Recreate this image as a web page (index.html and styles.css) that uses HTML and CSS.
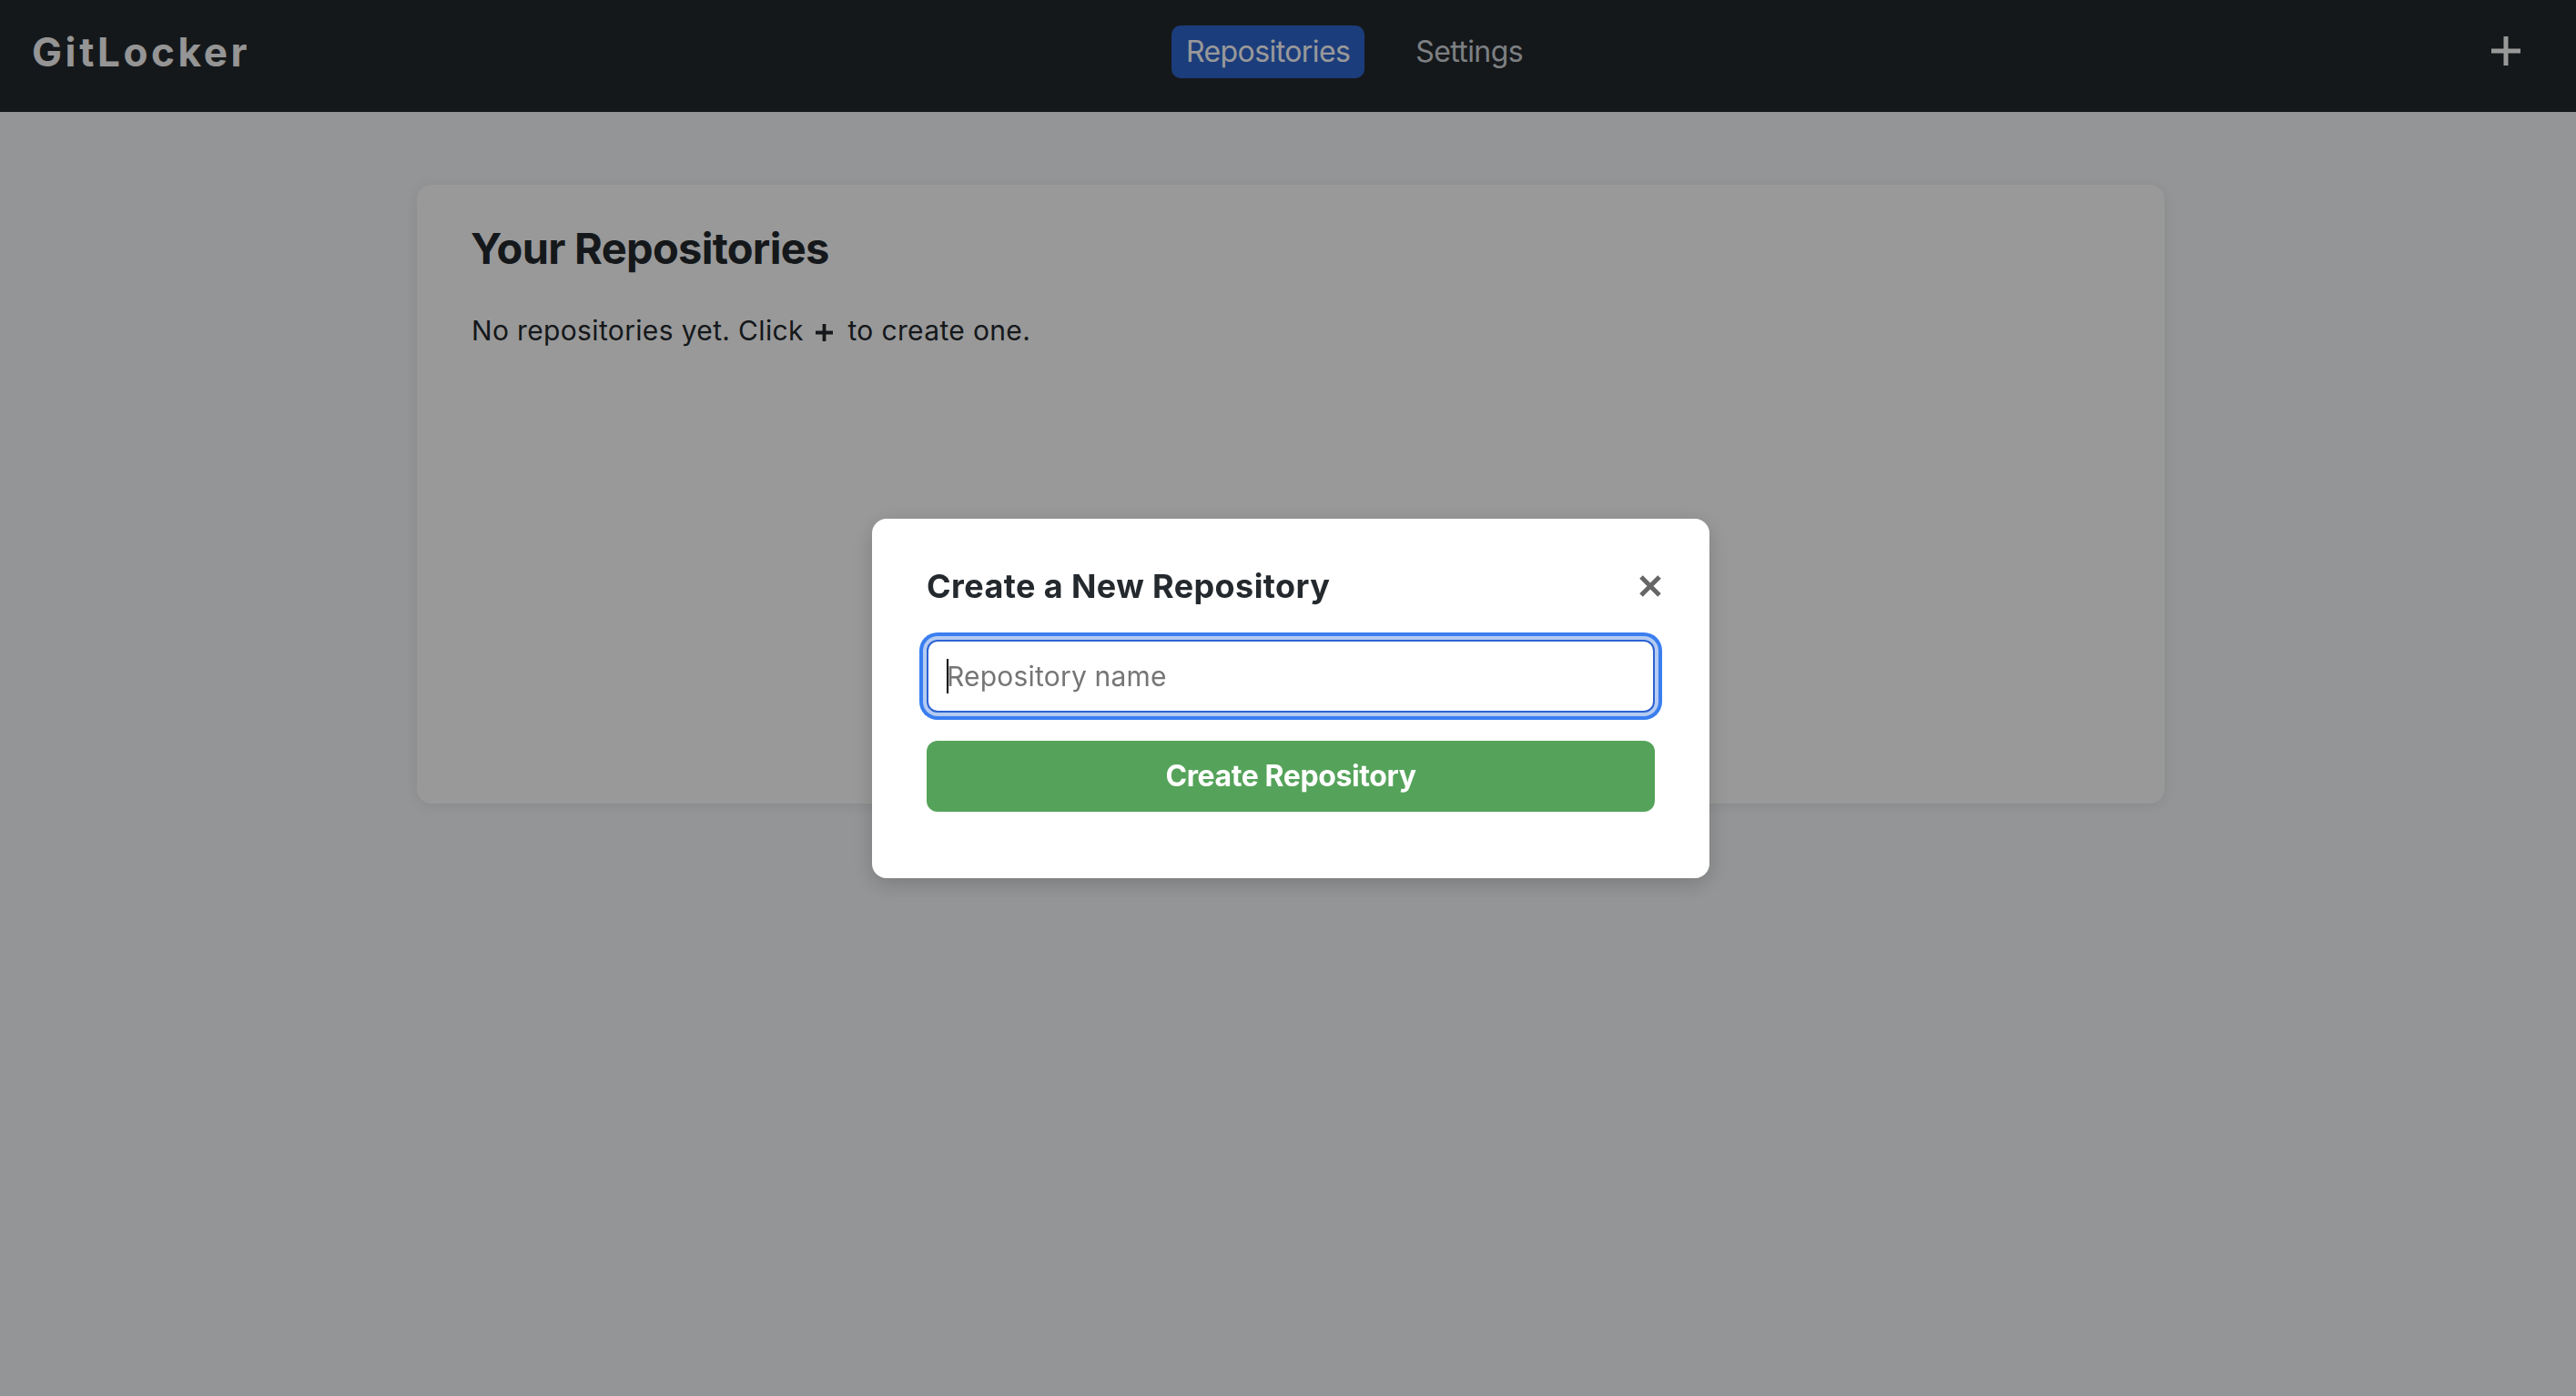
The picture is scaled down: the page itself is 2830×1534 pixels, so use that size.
FILE: index.html
```html
<!DOCTYPE html>
<html lang="en">
<head>
<meta charset="utf-8">
<title>GitLocker</title>
<link rel="stylesheet" href="styles.css">
</head>
<body>
<header class="topbar">
  <div class="logo">GitLocker</div>
  <nav class="nav">
    <a class="nav-link active" href="#">Repositories</a>
    <a class="nav-link" href="#">Settings</a>
  </nav>
  <button class="add-btn" type="button" aria-label="New repository">
    <svg width="34" height="34" viewBox="0 0 34 34"><path d="M17 1V33M1 17H33" stroke="currentColor" stroke-width="5" fill="none"/></svg>
  </button>
</header>
<main class="main">
  <section class="card">
    <h1 class="card-title">Your Repositories</h1>
    <p class="empty">No repositories yet. Click <svg class="inline-plus" width="21" height="21" viewBox="0 0 21 21"><path d="M10.5 1V20M1 10.5H20" stroke="currentColor" stroke-width="3.8" fill="none"/></svg> to create one.</p>
  </section>
</main>
<div class="backdrop">
  <div class="modal">
    <div class="modal-head">
      <h2 class="modal-title">Create a New Repository</h2>
      <button class="close-btn" type="button" aria-label="Close">
        <svg width="24" height="24" viewBox="0 0 24 24"><path d="M2 2L22 22M22 2L2 22" stroke="currentColor" stroke-width="5" fill="none"/></svg>
      </button>
    </div>
    <div class="input-wrap">
      <input class="repo-input" type="text" placeholder="Repository name">
      <span class="caret"></span>
    </div>
    <button class="primary-btn" type="button">Create Repository</button>
  </div>
</div>
</body>
</html>
```

FILE: styles.css
```css
* { box-sizing: border-box; }

html, body {
  margin: 0;
  padding: 0;
}

body {
  background: #f6f8fa;
  font-family: Inter, "Liberation Sans", sans-serif;
  color: #24292e;
  min-height: 1534px;
}

.topbar {
  display: flex;
  justify-content: space-between;
  align-items: center;
  background: #24292e;
  padding: 28px 32px 37px;
}

.logo {
  color: #f8f8f8;
  font-size: 44px;
  font-weight: 700;
  letter-spacing: 3.6px;
  line-height: 58px;
  padding-left: 3px;
}

.nav {
  display: flex;
  gap: 40px;
  margin-right: 7px;
}

.nav-link {
  display: block;
  height: 58px;
  line-height: 58px;
  padding: 0 16px;
  border-radius: 10px;
  color: #d1d5da;
  font-size: 32px;
  letter-spacing: -0.6px;
  text-decoration: none;
}

.nav-link.active {
  background: #2f66cf;
  color: #ffffff;
}

.add-btn {
  width: 90px;
  height: 58px;
  display: flex;
  align-items: center;
  justify-content: center;
  background: none;
  border: 0;
  padding: 0;
  color: #ffffff;
  margin-top: -2px;
}

.main {
  padding: 80px 0 80px 6px;
}

.card {
  width: 1920px;
  margin: 0 auto;
  min-height: 680px;
  background: #ffffff;
  border-radius: 16px;
  box-shadow: 0 2px 14px rgba(0, 0, 0, 0.08);
  padding: 42px 60px;
}

.card-title {
  margin: 0 0 41px;
  font-size: 47px;
  line-height: 1.2;
  font-weight: 700;
  letter-spacing: -0.7px;
  margin-left: -1px;
}

.empty {
  margin: 0;
  font-size: 30px;
  line-height: 1.45;
  letter-spacing: 0.35px;
}

.inline-plus {
  vertical-align: -2px;
  margin: 0 7px 0 3px;
}

.backdrop {
  position: fixed;
  inset: 0;
  background: rgba(0, 0, 0, 0.4);
  display: flex;
  align-items: center;
  justify-content: center;
}

.modal {
  width: 920px;
  background: #ffffff;
  border-radius: 16px;
  padding: 52px 60px 73px;
  box-shadow: 0 6px 24px rgba(0, 0, 0, 0.18);
  margin-left: 6px;
}

.modal-head {
  display: flex;
  justify-content: space-between;
  align-items: center;
  height: 44px;
  margin-bottom: 37px;
}

.modal-title {
  margin: 0;
  font-size: 36px;
  line-height: 44px;
  font-weight: 700;
  letter-spacing: 0.4px;
}

.close-btn {
  width: 24px;
  height: 24px;
  padding: 0;
  border: 0;
  background: none;
  color: #666666;
  margin-right: -7px;
  display: flex;
}

.input-wrap {
  position: relative;
}

.repo-input {
  display: block;
  width: 100%;
  height: 80px;
  border: 2px solid #2c63d3;
  border-radius: 12px;
  padding: 0 20px;
  font-family: inherit;
  font-size: 30px;
  letter-spacing: 0.2px;
  color: #24292e;
  outline: none;
  box-shadow: 0 0 0 4px #b5cbf1, 0 0 0 8px #3a7ef0;
}

.repo-input::placeholder {
  color: #757575;
}

.caret {
  position: absolute;
  left: 22px;
  top: 21px;
  width: 2px;
  height: 38px;
  background: #000000;
}

.primary-btn {
  display: block;
  width: 100%;
  height: 78px;
  margin-top: 31px;
  border: 0;
  border-radius: 12px;
  background: #55a35a;
  color: #ffffff;
  font-family: inherit;
  font-size: 32px;
  font-weight: 700;
  letter-spacing: -0.4px;
}
```
